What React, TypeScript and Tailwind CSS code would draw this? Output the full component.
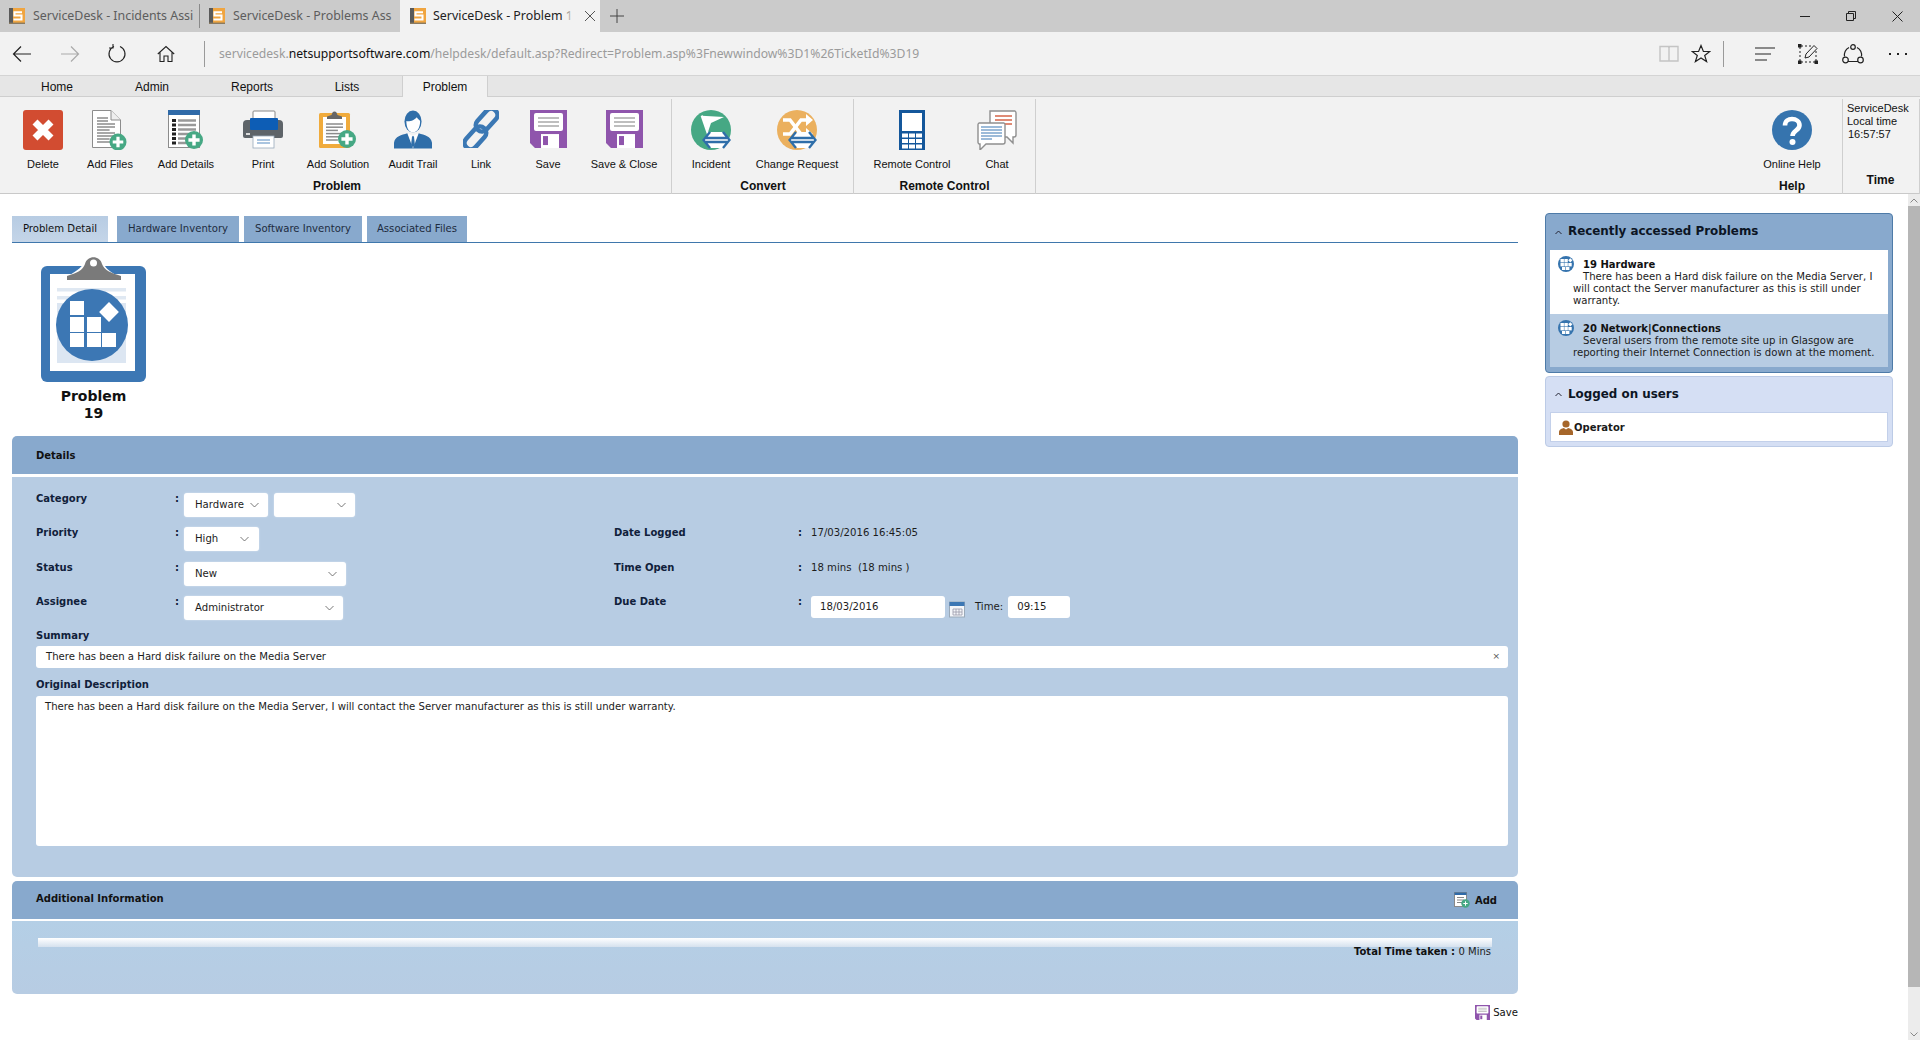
import React from "react";

const Plus = ({ cx = 32, cy = 32, r = 8.5 }: { cx?: number; cy?: number; r?: number }) => (
  <g>
    <circle cx={cx} cy={cy} r={r} fill="#46a884" />
    <path d={`M${cx - r * 0.62} ${cy}H${cx + r * 0.62}M${cx} ${cy - r * 0.62}V${cy + r * 0.62}`} stroke="#fff" strokeWidth={r * 0.38} />
  </g>
);
const Lines = ({ x, y, w, n, gap = 3 }: { x: number; y: number; w: number; n: number; gap?: number }) => (
  <g stroke="#8b8b8b" strokeWidth="1.5">
    {Array.from({ length: n }).map((_, i) => (
      <path key={i} d={`M${x} ${y + i * gap}h${i % 3 === 2 ? w * 0.7 : w}`} />
    ))}
  </g>
);
const S = ({ children, w = 40, h = 40 }: { children: React.ReactNode; w?: number; h?: number }) => (
  <svg width={w} height={h} viewBox={`0 0 ${w} ${h}`} className="block">{children}</svg>
);

const IDelete = () => (
  <S>
    <rect width="40" height="40" rx="3" fill="#d24c31" />
    <path d="M12 12L28 28M28 12L12 28" stroke="#fff" strokeWidth="7" />
  </S>
);
const IFiles = () => (
  <S w={36}>
    <path d="M.5.5H19L28.5 10V37.5H.5Z" fill="#fff" stroke="#8c8c8c" />
    <path d="M19 .5V10H28.5" fill="#eee" stroke="#8c8c8c" />
    <Lines x={5} y={8} w={11} n={2} gap={3} />
    <Lines x={5} y={14} w={18} n={7} gap={3} />
    <Plus cx={26} cy={32} r={8.5} />
  </S>
);
const IDetails = () => (
  <S w={36}>
    <rect x=".5" y=".5" width="31" height="37" fill="#fff" stroke="#8c8c8c" />
    <rect x="0" y="0" width="32" height="5" fill="#2f6aa8" />
    <g fill="#222"><rect x="4" y="9" width="4" height="3" /><rect x="4" y="13.5" width="4" height="3" /><rect x="4" y="18" width="4" height="3" /><rect x="4" y="22.5" width="4" height="3" /><rect x="4" y="27" width="4" height="3" /><rect x="4" y="31.5" width="4" height="3" /></g>
    <g stroke="#999" strokeWidth="2.4"><path d="M10 10.5H28M10 15H28M10 19.5H28M10 24H22M10 28.5H18M10 33H18" /></g>
    <Plus cx={26} cy={30} r={9} />
  </S>
);
const IPrint = () => (
  <S>
    <rect x="10" y="1" width="22" height="14" rx="1" fill="#fff" stroke="#888" />
    <path d="M0 14a4 4 0 0 1 4-4H36a4 4 0 0 1 4 4V26a2 2 0 0 1-2 2H2a2 2 0 0 1-2-2Z" fill="#5e6469" />
    <rect x="7" y="8" width="28" height="12" rx="1" fill="#0d5db5" />
    <rect x="3" y="23" width="4" height="2" fill="#ddd" />
    <rect x="10" y="26" width="21" height="12" fill="#fff" stroke="#9ab" strokeWidth=".8" />
    <path d="M14 30h13M14 33h13" stroke="#8eb3d6" strokeWidth="1.3" />
  </S>
);
const ISolution = () => (
  <S w={38}>
    <rect x="0" y="3" width="31" height="35" rx="1.5" fill="#f0ab3c" />
    <rect x="4" y="7" width="23" height="27" fill="#fff" />
    <path d="M8 9V6.5L12.5 5L13.5 2.5A2.5 2.5 0 0 1 17.5 2.5L18.5 5L23 6.5V9Z" fill="#666" />
    <Lines x={7} y={14} w={17} n={6} gap={3.2} />
    <Plus cx={28} cy={29} r={9} />
  </S>
);
const IAudit = () => (
  <svg width="38" height="39" viewBox="0 0 40 40" className="block">
    <ellipse cx="20" cy="11.5" rx="9" ry="11.5" fill="#2f6ea9" />
    <path d="M13 11c3 1 9-1 11-4 1 2 3 3 3.5 4 0 7-3 12-7.5 12S13 18 13 11Z" fill="#fff" />
    <path d="M14 24C8 26 1 27 0 34V40H40V34C39 27 32 26 26 24L20 40Z" fill="#2f6ea9" />
    <path d="M14.5 24L20 38L25.5 24L20 27Z" fill="#fff" />
    <path d="M19 27h2l1 9-2 3-2-3Z" fill="#2f6ea9" />
  </svg>
);
const ILink = () => (
  <svg width="36" height="38" viewBox="0 0 40 40" className="block">
    <g fill="none" stroke="#3b78b4" strokeWidth="5" transform="rotate(-48 20 20)">
      <rect x="-6" y="15" width="29" height="14" rx="7" />
      <rect x="17" y="11" width="29" height="14" rx="7" />
    </g>
  </svg>
);
const ISave = ({ size = 37 }: { size?: number }) => (
  <svg width={size} height={size * 1.03} viewBox="0 0 37 38" className="block">
    <path d="M0 0H37V38H5L0 33Z" fill="#8f55ac" />
    <rect x="4" y="3" width="29" height="18" rx="2" fill="#fff" />
    <path d="M8 8h21M8 12h21M8 16h21" stroke="#a9a9a9" strokeWidth="1.6" />
    <rect x="11" y="24" width="18" height="14" fill="#fff" />
    <rect x="13" y="26" width="5" height="9" fill="#8f55ac" />
  </svg>
);
const DoubleArrow = () => (
  <g>
    <path d="M12 30L20 22H31L39 30L31 38H20Z" fill="#fff" />
    <g fill="none" stroke="#2f6ea9" strokeWidth="2.3">
      <path d="M19 22L12.5 30L19 38M32 22L38.5 30L32 38M15 28H36M15 32H36" />
    </g>
  </g>
);
const IIncident = () => (
  <S>
    <ellipse cx="20" cy="20" rx="20" ry="20" fill="#46a884" />
    <path d="M10.7 5.7L18 27" stroke="#fff" strokeWidth="2.2" />
    <path d="M10.7 5.7L33 7L20 13L17 22Z" fill="#fff" />
    <DoubleArrow />
  </S>
);
const IChange = () => (
  <S>
    <ellipse cx="20" cy="20" rx="20" ry="20" fill="#ebb05e" />
    <g fill="none" stroke="#fff" strokeWidth="3.5">
      <path d="M6 10H13L24 24H30" />
      <path d="M6 24H13L24 10H30" />
    </g>
    <path d="M29 4L36 10L29 16ZM29 18L36 24L29 30Z" fill="#fff" />
    <DoubleArrow />
  </S>
);
const IRemote = () => (
  <svg width="26" height="40" viewBox="0 0 26 40" className="block">
    <rect width="26" height="40" fill="#14579b" />
    <rect x="3" y="3" width="20" height="18" fill="#fff" />
    <g fill="#fff">
      {[23.5, 29, 34.5].map((y) => [3, 10, 17].map((x) => <rect key={`${x}-${y}`} x={x} y={y} width="6" height="4" />))}
    </g>
  </svg>
);
const IChat = () => (
  <S>
    <path d="M13 1H38a2 2 0 0 1 1 2V25a2 2 0 0 1-2 2H36V33L30 27H13Z" fill="#fff" stroke="#8f8f8f" strokeWidth="1.4" />
    <path d="M18 6H35M18 10H35M28 14H35" stroke="#d5664a" strokeWidth="1.3" />
    <path d="M2 13H27a2 2 0 0 1 1 2V32a2 2 0 0 1-2 2H9L3 40V34H2a2 2 0 0 1-1-2V15a2 2 0 0 1 1-2Z" fill="#fff" stroke="#8f8f8f" strokeWidth="1.4" />
    <path d="M4 17H25M4 20H25M4 23H25M4 26H25M4 29H15" stroke="#3b78b4" strokeWidth="1.2" />
  </S>
);
const IHelp = () => (
  <S>
    <circle cx="20" cy="20" r="20" fill="#3674ae" />
    <path d="M13 15.5C13 11 16.5 9 20 9C24 9 27.5 11.5 27.5 15.2C27.5 20.5 20.5 20.5 20.5 26" fill="none" stroke="#fff" strokeWidth="4.6" />
    <circle cx="20.5" cy="32" r="3" fill="#fff" />
  </S>
);

const Favicon = () => (
  <svg width="16" height="16" viewBox="0 0 16 16" className="block shrink-0">
    <rect width="16" height="16" fill="#f0a540" />
    <rect x="0" y="0" width="4" height="16" fill="#5a5a5a" />
    <rect x="0" y="14.6" width="16" height="1.4" fill="#8a7a60" />
    <path d="M13 4.2H5.5V7.6H12.5V11.4H4.5" fill="none" stroke="#fff" strokeWidth="2" />
  </svg>
);

const Btn = ({ w, icon, label }: { w: string; icon: React.ReactNode; label: string }) => (
  <div className={`${w} flex flex-col items-center shrink-0`}>
    <div className="h-[40px] mt-[13px] flex items-start justify-center">{icon}</div>
    <div className="mt-[8px] text-[11px] leading-[13px] text-[#111] whitespace-nowrap">{label}</div>
  </div>
);
const GroupLabel = ({ children, pl = "" }: { children: React.ReactNode; pl?: string }) => (
  <div className={`text-center text-[12px] leading-[14px] font-bold text-[#111] mt-[8px] ${pl}`}>{children}</div>
);

const Chevron = () => (
  <svg width="9" height="6" viewBox="0 0 9 6" className="block"><path d="M.5 1L4.5 5L8.5 1" fill="none" stroke="#555" strokeWidth="0.8" /></svg>
);
const ChevronUp = () => (
  <svg width="7" height="5" viewBox="0 0 7 5" className="block shrink-0"><path d="M.5 4L3.5 1L6.5 4" fill="none" stroke="#223" strokeWidth="1" /></svg>
);
const Sel = ({ w, text, pr }: { w: string; text?: string; pr: string }) => (
  <div className={`${w} h-[24px] bg-white rounded-[3px] flex items-center justify-between pl-[11px] ${pr} text-[10.15px] text-[#1c1c1c] shadow-[0_0_2px_#dbe6f2]`}>
    <span>{text}</span>
    <Chevron />
  </div>
);
const Label = ({ children, w = "w-[139px]" }: { children: React.ReactNode; w?: string }) => (
  <div className={`${w} shrink-0 text-[10px] leading-[12px] font-bold text-[#10203a]`}>{children}</div>
);
const Colon = ({ w = "w-[9px]" }: { w?: string }) => <div className={`${w} shrink-0 text-[10px] leading-[12px] font-bold text-[#10203a]`}>:</div>;

const FolderIcon = () => (
  <svg width="16" height="16" viewBox="0 0 16 16" className="block">
    <circle cx="8" cy="8" r="8" fill="#3674ae" />
    <g fill="#fff"><rect x="2.5" y="3" width="3.4" height="3.4" /><rect x="6.4" y="3" width="3.4" height="3.4" /><rect x="10.8" y="2.8" width="3" height="3" transform="rotate(45 12.3 4.3)" /><rect x="2.5" y="7" width="3.4" height="3.4" /><rect x="6.4" y="7" width="3.4" height="3.4" /><rect x="10.3" y="7" width="3.4" height="3.4" /><rect x="4" y="11" width="3.4" height="3" /><rect x="8" y="11" width="3.4" height="3" /></g>
  </svg>
);
const ProblemItem = ({ title, lines, bg, h }: { title: string; lines: string[]; bg: string; h: string }) => (
  <div className={`${bg} ${h} relative pl-[23px] pt-[9px] text-[10.15px] leading-[12px] text-[#1c1c1c]`}>
    <div className="absolute left-[8px] top-[6px]"><FolderIcon /></div>
    <div className="pl-[10px] font-bold text-[10px] text-[#111]">{title}</div>
    {lines.map((l, i) => (
      <div key={l} className={`whitespace-nowrap ${i === 0 ? "pl-[10px]" : ""}`}>{l}</div>
    ))}
  </div>
);

export default function App() {
  return (
    <div className="w-[1920px] h-[1040px] overflow-hidden flex flex-col bg-white font-['Liberation_Sans',sans-serif]">
      {/* browser tabs */}
      <div className="h-[32px] bg-[#cbcbcb] flex items-center shrink-0 font-['Noto_Sans',sans-serif] text-[12.4px]">
        <div className="w-[199px] h-[32px] flex items-center pl-[9px] gap-[8px] text-[#5d5d5d]">
          <Favicon />
          <span className="whitespace-nowrap w-[158px] pt-[1px]">ServiceDesk - Incidents Assi</span>
        </div>
        <div className="w-px h-[24px] bg-[#8a8a8a]" />
        <div className="w-[200px] h-[32px] flex items-center pl-[9px] gap-[8px] text-[#5d5d5d]">
          <Favicon />
          <span className="whitespace-nowrap w-[158px] pt-[1px]">ServiceDesk - Problems Ass</span>
        </div>
        <div className="w-[200px] h-[32px] bg-[#f2f2f2] flex items-center pl-[10px] gap-[7px] text-[#222]">
          <Favicon />
          <span className="relative whitespace-nowrap w-[139px] pt-[1px]">
            ServiceDesk - Problem 1
            <span className="absolute right-0 top-0 bottom-0 w-[8px] bg-gradient-to-r from-[#f2f2f200] to-[#f2f2f2]" />
          </span>
          <svg width="12" height="12" viewBox="0 0 12 12" className="ml-[5px]"><path d="M1 1L11 11M11 1L1 11" stroke="#555" strokeWidth="1" /></svg>
        </div>
        <svg width="14" height="14" viewBox="0 0 14 14" className="ml-[10px]"><path d="M7 0V14M0 7H14" stroke="#444" strokeWidth="1" /></svg>
        <div className="flex-1" />
        <div className="w-[46px] flex justify-center"><div className="w-[10px] h-px bg-[#222]" /></div>
        <div className="w-[46px] flex justify-center">
          <svg width="10" height="10" viewBox="0 0 10 10"><path d="M.5 2.5H7.5V9.5H.5ZM2.5 2.5V.5H9.5V7.5H7.5" fill="none" stroke="#222" /></svg>
        </div>
        <div className="w-[46px] flex justify-center">
          <svg width="11" height="11" viewBox="0 0 11 11"><path d="M.5.5L10.5 10.5M10.5.5L.5 10.5" stroke="#222" /></svg>
        </div>
      </div>

      {/* address bar */}
      <div className="h-[44px] bg-[#f2f2f2] flex items-center shrink-0 border-b border-[#d4d4d4] font-['Noto_Sans',sans-serif]">
        <svg width="20" height="18" viewBox="0 0 20 18" className="ml-[12px]"><path d="M19 9H1.5M9 1.5L1.5 9L9 16.5" fill="none" stroke="#222" strokeWidth="1.2" /></svg>
        <svg width="20" height="18" viewBox="0 0 20 18" className="ml-[28px]"><path d="M1 9H18.5M11 1.5L18.5 9L11 16.5" fill="none" stroke="#aaa" strokeWidth="1.2" /></svg>
        <svg width="20" height="20" viewBox="0 0 20 20" className="ml-[27px]"><path d="M7 2.5A8 8 0 1 0 13 2.5M6 0V4H2" fill="none" stroke="#222" strokeWidth="1.1" /></svg>
        <svg width="18" height="18" viewBox="0 0 18 18" className="ml-[30px]"><path d="M.8 9L9 1.5L17.2 9M3 7.5V16.5H7V11H11V16.5H15V7.5" fill="none" stroke="#222" strokeWidth="1.1" /></svg>
        <div className="w-px h-[26px] bg-[#9a9a9a] ml-[29px]" />
        <div className="ml-[14px] mt-[2px] text-[12.18px] whitespace-nowrap text-[#9b9b9b] w-[1000px]">
          servicedesk.<span className="text-[#111]">netsupportsoftware.com</span>/helpdesk/default.asp?Redirect=Problem.asp%3Fnewwindow%3D1%26TicketId%3D19
        </div>
        <div className="flex-1" />
        <svg width="20" height="18" viewBox="0 0 20 18"><path d="M1 1.5H9.5L10 3L10.5 1.5H19V16H1ZM10 3V16" fill="none" stroke="#c4c4c4" strokeWidth="1.4" /></svg>
        <svg width="20" height="19" viewBox="0 0 20 19" className="ml-[12px]"><path d="M10 1.5L12.4 7.5H18.8L13.7 11.4L15.6 17.6L10 14L4.4 17.6L6.3 11.4L1.2 7.5H7.6Z" fill="none" stroke="#222" strokeWidth="1.2" /></svg>
        <div className="w-px h-[26px] bg-[#9a9a9a] ml-[12px]" />
        <svg width="20" height="14" viewBox="0 0 20 14" className="ml-[31px]"><path d="M0 1H20M0 7H16M0 13H12" stroke="#222" strokeWidth="1.2" /></svg>
        <svg width="20" height="20" viewBox="0 0 20 20" className="ml-[23px]"><path d="M3 2H13M2 3V17M3 18H17M18 7V17" stroke="#222" strokeDasharray="2 2" /><g fill="#222"><rect x="0" y="0" width="3.5" height="3.5" /><rect x="0" y="16.5" width="3.5" height="3.5" /><rect x="16.5" y="16.5" width="3.5" height="3.5" /></g><path d="M7 14L8 10L16 1.5L19 4.5L11 13Z" fill="#f2f2f2" stroke="#222" /></svg>
        <svg width="22" height="20" viewBox="0 0 22 20" className="ml-[24px]"><g fill="none" stroke="#222" strokeWidth="1.2"><path d="M7 3.5A9 9 0 0 0 2.5 12.5M15 3.5A9 9 0 0 1 19.5 12.5M6 17.5H16" /><circle cx="11" cy="3" r="2.3" fill="#f2f2f2" /><circle cx="3.5" cy="16" r="2.8" /><circle cx="18.5" cy="16" r="2.8" /></g></svg>
        <div className="ml-[25px] mr-[13px] flex gap-[6px]">
          <div className="w-[2px] h-[2px] bg-[#222]" /><div className="w-[2px] h-[2px] bg-[#222]" /><div className="w-[2px] h-[2px] bg-[#222]" />
        </div>
      </div>

      {/* ribbon tabs */}
      <div className="h-[21px] bg-[#e6e6e6] border-b border-[#cfcfcf] flex text-[12px] text-[#111] shrink-0">
        <div className="w-[114px] flex items-center justify-center pt-[1px]">Home</div>
        <div className="w-[76px] flex items-center justify-center pt-[1px]">Admin</div>
        <div className="w-[124px] flex items-center justify-center pt-[1px]">Reports</div>
        <div className="w-[66px] flex items-center justify-center pt-[1px]">Lists</div>
        <div className="w-[86px] ml-[22px] h-[21px] bg-[#f2f2f2] border-x border-[#cfcfcf] flex items-center justify-center pt-[1px]">Problem</div>
      </div>

      {/* ribbon */}
      <div className="h-[97px] bg-[#f2f2f2] border-b border-[#c9c9c9] flex shrink-0">
        <div className="w-[672px] border-r border-[#cfcfcf] mt-[2px] -mb-px shrink-0 flex flex-col">
          <div className="flex pl-[9px] -mt-[2px]">
            <Btn w="w-[68px]" icon={<IDelete />} label="Delete" />
            <Btn w="w-[66px]" icon={<IFiles />} label="Add Files" />
            <Btn w="w-[86px]" icon={<IDetails />} label="Add Details" />
            <Btn w="w-[68px]" icon={<IPrint />} label="Print" />
            <Btn w="w-[82px]" icon={<ISolution />} label="Add Solution" />
            <Btn w="w-[68px]" icon={<IAudit />} label="Audit Trail" />
            <Btn w="w-[68px]" icon={<ILink />} label="Link" />
            <Btn w="w-[66px]" icon={<ISave />} label="Save" />
            <Btn w="w-[86px]" icon={<ISave />} label="Save & Close" />
          </div>
          <GroupLabel pl="pl-[3px]">Problem</GroupLabel>
        </div>
        <div className="w-[182px] border-r border-[#cfcfcf] mt-[2px] -mb-px shrink-0 flex flex-col">
          <div className="flex pl-[3px] -mt-[2px]">
            <Btn w="w-[72px]" icon={<IIncident />} label="Incident" />
            <Btn w="w-[100px]" icon={<IChange />} label="Change Request" />
          </div>
          <GroupLabel pl="pl-[1px]">Convert</GroupLabel>
        </div>
        <div className="w-[182px] border-r border-[#cfcfcf] mt-[2px] -mb-px shrink-0 flex flex-col">
          <div className="flex pl-[18px] gap-[6px] -mt-[2px]">
            <Btn w="w-[80px]" icon={<IRemote />} label="Remote Control" />
            <Btn w="w-[78px]" icon={<IChat />} label="Chat" />
          </div>
          <GroupLabel>Remote Control</GroupLabel>
        </div>
        <div className="flex-1" />
        <div className="w-[100px] flex flex-col shrink-0">
          <Btn w="w-[100px]" icon={<IHelp />} label="Online Help" />
          <GroupLabel>Help</GroupLabel>
        </div>
        <div className="w-[78px] border-x border-[#cfcfcf] mt-[2px] -mb-px shrink-0 pl-[4px] pr-[5px] pt-[3px] text-[11px] leading-[13px] text-[#111] flex flex-col">
          <div>ServiceDesk</div>
          <div>Local time</div>
          <div className="pl-[1px]">16:57:57</div>
          <div className="mt-[32px] text-center font-bold text-[12px] leading-[14px]">Time</div>
        </div>
      </div>

      {/* page */}
      <div className="flex-1 min-h-0 flex font-['DejaVu_Sans',sans-serif]">
        <div className="w-[1506px] ml-[12px] shrink-0">
          {/* tabs */}
          <div className="h-[49px] flex items-end border-b border-[#3f77ac] gap-[5px] text-[10.1px] text-[#1e2c40]">
            <div className="w-[96px] h-[26px] mr-[4px] bg-gradient-to-b from-[#b7cce3] to-[#c4d5e8] flex items-center justify-center text-[#111]">Problem Detail</div>
            <div className="w-[122px] h-[26px] bg-[#88a9cd] flex items-center justify-center">Hardware Inventory</div>
            <div className="w-[118px] h-[26px] bg-[#88a9cd] flex items-center justify-center">Software Inventory</div>
            <div className="w-[100px] h-[26px] bg-[#88a9cd] flex items-center justify-center">Associated Files</div>
          </div>

          {/* problem icon */}
          <div className="h-[193px] pl-[29px] pt-[13px] flex flex-col">
            <svg width="105" height="127" viewBox="0 0 105 127" className="block">
              <rect x="0" y="10" width="105" height="116" rx="6" fill="#3c77b4" />
              <rect x="9" y="18" width="85" height="97" fill="#fff" />
              <rect x="16" y="32" width="69" height="3.5" fill="#dfe8f2" />
              <rect x="16" y="40" width="69" height="3.5" fill="#dfe8f2" />
              <rect x="16" y="47" width="69" height="60" fill="#dce6f2" />
              <path d="M22 24C30 17 38 15 42 8C46 -3 60 -3 63 8C66 15 72 17 84 24Z" fill="#fff" />
              <path d="M26 24V20C36 17 42 14 44 8C46 -1 59 -1 61 8C63 14 70 17 80 20V24Z" fill="#7a7a7a" />
              <circle cx="52.5" cy="7" r="3.5" fill="#fff" />
              <circle cx="51" cy="69" r="36" fill="#3c77b4" />
              <g fill="#fff">
                <rect x="29" y="45" width="14" height="14" /><rect x="29" y="61" width="14" height="15" /><rect x="46" y="61" width="14" height="15" />
                <rect x="29" y="77" width="14" height="14" /><rect x="46" y="77" width="14" height="14" /><rect x="61" y="77" width="14" height="14" />
                <rect x="61" y="49" width="14" height="14" transform="rotate(45 68 56)" />
              </g>
            </svg>
            <div className="w-[105px] text-center text-[14px] leading-[17px] font-bold text-[#111] mt-[5px]">Problem<br />19</div>
          </div>

          {/* details */}
          <div className="h-[38px] bg-[#88a9cd] rounded-t-[5px] flex items-center pl-[24px] text-[10px] font-bold text-[#111]">Details</div>
          <div className="mt-[3px] h-[400px] bg-[#b7cce3] rounded-b-[5px] pt-[16px] pl-[24px] pr-[10px]">
            <div className="h-[34px] flex">
              <Label>Category</Label><Colon />
              <div className="flex gap-[6px]">
                <Sel w="w-[84px]" text="Hardware" pr="pr-[9px]" />
                <Sel w="w-[81px]" pr="pr-[9px]" />
              </div>
            </div>
            <div className="h-[35px] flex">
              <Label>Priority</Label><Colon />
              <div className="w-[430px]"><Sel w="w-[75px]" text="High" pr="pr-[10px]" /></div>
              <Label w="w-[184px]">Date Logged</Label><Colon w="w-[13px]" /><div className="text-[10.15px] leading-[12px] text-[#1c1c1c]">17/03/2016 16:45:05</div>
            </div>
            <div className="h-[34px] flex">
              <Label>Status</Label><Colon />
              <div className="w-[430px]"><Sel w="w-[162px]" text="New" pr="pr-[9px]" /></div>
              <Label w="w-[184px]">Time Open</Label><Colon w="w-[13px]" /><div className="text-[10.15px] leading-[12px] text-[#1c1c1c]">18 mins&nbsp; (18 mins )</div>
            </div>
            <div className="h-[34px] flex">
              <Label>Assignee</Label><Colon />
              <div className="w-[430px]"><Sel w="w-[159px]" text="Administrator" pr="pr-[9px]" /></div>
              <Label w="w-[184px]">Due Date</Label><Colon w="w-[13px]" />
              <div className="flex items-start">
                <div className="w-[134px] h-[22px] bg-white rounded-[3px] flex items-center pl-[9px] text-[10.15px] text-[#1c1c1c]">18/03/2016</div>
                <svg width="16" height="18" viewBox="0 0 16 18" className="ml-[4px] mt-[4px]"><rect x=".5" y="2" width="15" height="15" fill="#f4f6f9" stroke="#9aa9b8" /><rect x=".5" y="2" width="15" height="4" fill="#3c77b4" /><path d="M4 9H13V15H4ZM7 9V15M10 9V15M4 12H13" fill="none" stroke="#99a" strokeWidth=".8" /></svg>
                <div className="ml-[10px] mt-[5px] text-[10.15px] leading-[12px] text-[#1c1c1c]">Time:</div>
                <div className="ml-[5px] w-[62px] h-[22px] bg-white rounded-[3px] flex items-center pl-[9px] text-[10.15px] text-[#1c1c1c]">09:15</div>
              </div>
            </div>
            <div className="h-[12px]"><Label w="w-[200px]">Summary</Label></div>
            <div className="mt-[4px] h-[22px] w-[1472px] bg-white rounded-[3px] flex items-center justify-between pl-[10px] pr-[8px] text-[10.15px] text-[#1c1c1c]">
              <span>There has been a Hard disk failure on the Media Server</span>
              <span className="text-[9px] text-[#555]">×</span>
            </div>
            <div className="mt-[11px] h-[12px]"><Label w="w-[200px]">Original Description</Label></div>
            <div className="mt-[5px] h-[150px] w-[1472px] bg-white rounded-[3px] pl-[9px] pt-[5px] text-[10.15px] leading-[12px] text-[#1c1c1c]">
              There has been a Hard disk failure on the Media Server, I will contact the Server manufacturer as this is still under warranty.
            </div>
          </div>

          {/* additional */}
          <div className="mt-[4px] h-[38px] bg-[#88a9cd] rounded-t-[5px] flex items-center justify-between pl-[24px] pr-[21px] text-[10px] font-bold text-[#111]">
            <span className="-mt-[4px]">Additional Information</span>
            <span className="flex items-center gap-[5px]">
              <svg width="16" height="16" viewBox="0 0 16 16" className="block"><rect x=".5" y=".5" width="12" height="14" fill="#fff" stroke="#888" /><rect x=".5" y=".5" width="12" height="2.5" fill="#2f6aa8" /><path d="M3 5.5h7M3 8h7M3 10.5h5" stroke="#888" /><circle cx="11.5" cy="11.5" r="4.2" fill="#46a884" /><path d="M9.3 11.5h4.4M11.5 9.3v4.4" stroke="#fff" /></svg>
              Add
            </span>
          </div>
          <div className="mt-[2px] h-[73px] bg-gradient-to-b from-[#b4cfe6] to-[#b7cce3] rounded-b-[5px] pt-[17px] pl-[26px] pr-[26px] text-[10px] leading-[12px]">
            <div className="h-[9px] bg-gradient-to-b from-white to-[#d5e1ee]" />
            <div className="-mt-[1px] pr-[1px] text-right text-[#222]"><span className="font-bold text-[#111]">Total Time taken : </span>0 Mins</div>
          </div>
          <div className="mt-[11px] flex justify-end items-center gap-[3px] text-[10.15px] text-[#111]">
            <ISave size={15} />
            Save
          </div>
        </div>

        {/* side */}
        <div className="w-[348px] ml-[27px] shrink-0 pt-[19px]">
          <div className="h-[160px] bg-[#88a9cd] border border-[#4e7ba8] rounded-[4px] px-[4px]">
            <div className="h-[36px] flex items-center pl-[5px] gap-[6px] text-[11.9px] font-bold text-[#0c1524]">
              <ChevronUp /><span>Recently accessed Problems</span>
            </div>
            <ProblemItem bg="bg-white" h="h-[64px]" title="19 Hardware" lines={["There has been a Hard disk failure on the Media Server, I", "will contact the Server manufacturer as this is still under", "warranty."]} />
            <ProblemItem bg="bg-[#b7cce3]" h="h-[53px]" title="20 Network|Connections" lines={["Several users from the remote site up in Glasgow are", "reporting their Internet Connection is down at the moment."]} />
          </div>
          <div className="mt-[3px] h-[71px] bg-[#d5dff4] border border-[#bccbe6] rounded-[4px] px-[4px]">
            <div className="h-[35px] flex items-center pl-[5px] gap-[6px] text-[11.9px] font-bold text-[#0c1524]">
              <ChevronUp /><span>Logged on users</span>
            </div>
            <div className="h-[30px] bg-white border border-[#c3d0ea] flex items-center pl-[8px] gap-[1px] text-[10px] font-bold text-[#1a1a1a]">
              <svg width="14" height="15" viewBox="0 0 14 15" className="block"><circle cx="7" cy="4" r="3.6" fill="#a6662a" /><path d="M0 15V12C0 9.5 3 8.5 4.8 8L7 9.5L9.2 8C11 8.5 14 9.5 14 12V15Z" fill="#a6662a" /></svg>
              Operator
            </div>
          </div>
        </div>

        {/* scrollbar */}
        <div className="w-[12px] ml-[15px] shrink-0 flex flex-col bg-[#ececec]">
          <div className="h-[12px] flex items-center justify-center"><svg width="8" height="5" viewBox="0 0 8 5"><path d="M.5 4.5L4 1L7.5 4.5" fill="none" stroke="#888" /></svg></div>
          <div className="h-[781px] bg-[#b6b6b6]" />
          <div className="flex-1 flex items-end justify-center pb-[3px]"><svg width="8" height="5" viewBox="0 0 8 5"><path d="M.5.5L4 4L7.5.5" fill="none" stroke="#888" /></svg></div>
        </div>
      </div>
    </div>
  );
}
